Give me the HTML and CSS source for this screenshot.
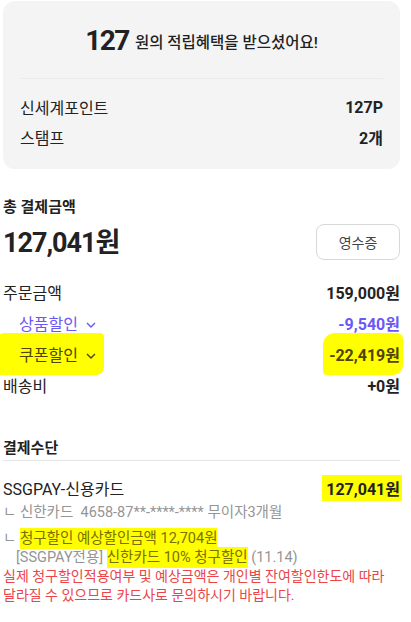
FILE: index.html
```html
<!DOCTYPE html>
<html lang="ko">
<head>
  <meta charset="UTF-8">
  <title>결제 완료</title>
  <link rel="stylesheet" href="styles.css">
</head>
<body>

  <div class="page">
    <div class="reward-card">
      <div class="reward-title">
        <span class="reward-num">127</span> 원의 적립혜택을 받으셨어요!
      </div>
      <div class="reward-rows">
        <div class="reward-row">
          <span>신세계포인트</span>
          <strong>127P</strong>
        </div>
        <div class="reward-row">
          <span>스탬프</span>
          <strong>2개</strong>
        </div>
      </div>
    </div>

    <div class="total-section">
      <h2 class="section-title">총 결제금액</h2>
      <div class="total-head">
        <div class="total-amount">127,041원</div>
        <button class="receipt-btn">영수증</button>
      </div>

      <div class="price-list">
        <div class="price-row">
          <span>주문금액</span>
          <strong>159,000원</strong>
        </div>
        <div class="price-row sub purple">
          <span>상품할인 <svg class="chev" viewBox="0 0 10 6"><path d="M1 1l4 4 4-4"/></svg></span>
          <strong>-9,540원</strong>
        </div>
        <div class="price-row sub marked">
          <span class="hl hl-coupon">쿠폰할인 <svg class="chev" viewBox="0 0 10 6"><path d="M1 1l4 4 4-4"/></svg></span>
          <strong class="hl hl-coupon-val">-22,419원</strong>
        </div>
        <div class="price-row">
          <span>배송비</span>
          <strong>+0원</strong>
        </div>
      </div>
    </div>

    <div class="pay-section">
      <h2 class="section-title line">결제수단</h2>
      <div class="pay-row">
        <span>SSGPAY-신용카드</span>
        <strong class="hl hl-pay">127,041원</strong>
      </div>
      <div class="pay-detail">ㄴ 신한카드&nbsp; 4658-87**-****-**** 무이자3개월</div>
      <div class="pay-detail discount">
        ㄴ <span class="hl hl-text">청구할인 예상할인금액 12,704원</span><br>
        <span class="indent">[SSGPAY전용] <span class="hl hl-text">신한카드 10% 청구할인</span> (11.14)</span>
      </div>
      <p class="notice">실제 청구할인적용여부 및 예상금액은 개인별 잔여할인한도에 따라 달라질 수 있으므로 카드사로 문의하시기 바랍니다.</p>
    </div>
  </div>

</body>
</html>
```

FILE: styles.css
```css
body {
  margin: 0;
  font-family: Roboto, "Noto Sans CJK KR", sans-serif;
  color: #222;
  background: #fff;
}

.page {
  padding: 1px 11px 0 3px;
}

/* 적립 카드 */
.reward-card {
  background: #f4f4f4;
  border-radius: 12px;
  height: 168px;
  box-sizing: border-box;
  padding: 0 17px;
}

.reward-title {
  height: 78px;
  display: flex;
  align-items: center;
  justify-content: center;
  gap: 6px;
  font-size: 15.5px;
  font-weight: 500;
  border-bottom: 1px solid #ebebeb;
  padding-top: 2px;
  box-sizing: border-box;
}

.reward-num {
  font-size: 28px;
  font-weight: 700;
  letter-spacing: -1.5px;
}

.reward-rows {
  padding-top: 13px;
}

.reward-row {
  display: flex;
  justify-content: space-between;
  align-items: center;
  height: 30px;
  font-size: 16px;
}

.reward-row strong {
  font-weight: 700;
}

/* 총 결제금액 */
.section-title {
  margin: 0;
  font-size: 15px;
  font-weight: 700;
}

.total-section {
  padding-top: 26px;
}

.total-head {
  display: flex;
  justify-content: space-between;
  align-items: center;
  margin-top: 5px;
}

.total-amount {
  font-size: 27px;
  font-weight: 700;
  letter-spacing: -1px;
}

.receipt-btn {
  width: 84px;
  height: 36px;
  margin-top: 2px;
  border: 1px solid #d8d8d8;
  border-radius: 8px;
  background: #fff;
  font-family: inherit;
  font-size: 14px;
  color: #444;
}

.price-list {
  margin-top: 16px;
}

.price-row {
  display: flex;
  justify-content: space-between;
  align-items: center;
  height: 31px;
  font-size: 16px;
}

.price-row strong {
  font-weight: 700;
}

.price-row.sub span {
  padding-left: 16px;
}

.price-row.purple {
  color: #6b58f5;
}

.price-row.marked {
  color: #4f4400;
}

.chev {
  width: 10px;
  height: 6px;
  margin-left: 4px;
  vertical-align: middle;
  fill: none;
  stroke: currentColor;
  stroke-width: 1.4;
}

/* 형광펜 표시 */
.hl {
  background: #ffff00;
}

.hl-coupon {
  margin-left: -8px;
  padding: 9px 8px 9px 8px;
  border-radius: 10px 4px 8px 3px;
}

.price-row.sub .hl-coupon {
  padding-left: 24px;
}

.hl-coupon-val {
  padding: 9px 3px 9px 6px;
  margin-right: -3px;
  border-radius: 12px 6px 10px 4px;
}

.hl-pay {
  padding: 1px 2px 1px 4px;
  margin-right: -2px;
}

.hl-text {
  color: #7a7000;
  padding: 2px 0;
}

/* 결제수단 */
.pay-section {
  padding-top: 36px;
}

.section-title.line {
  padding-bottom: 3px;
  border-bottom: 1px solid #e5e5e5;
}

.pay-row {
  display: flex;
  justify-content: space-between;
  align-items: center;
  margin-top: 14px;
  font-size: 16px;
}

.pay-row strong {
  font-weight: 700;
}

.pay-detail {
  margin-top: 2px;
  font-size: 14.5px;
  color: #959595;
  line-height: 19px;
}

.pay-detail.discount {
  margin-top: 7px;
}

.indent {
  padding-left: 13px;
}

.notice {
  margin: 0;
  font-size: 14px;
  line-height: 19px;
  color: #ec4448;
}
```
